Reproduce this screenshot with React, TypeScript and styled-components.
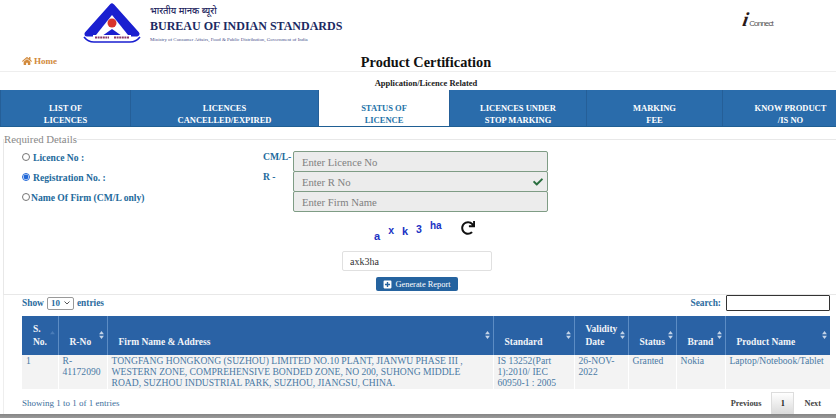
import React from "react";
import styled, { createGlobalStyle } from "styled-components";
import { FaCheck, FaHome, FaPlusSquare, FaRedo } from "react-icons/fa";

const GlobalStyle = createGlobalStyle`
  html, body { margin: 0; padding: 0; background: #fff; }
  body { font-family: "Liberation Serif", "Times New Roman", serif; overflow: hidden; }
  * { box-sizing: border-box; }
`;

const tabs = [
  { top: "LIST OF", bottom: "LICENCES" },
  { top: "LICENCES", bottom: "CANCELLED/EXPIRED" },
  { top: "STATUS OF", bottom: "LICENCE", active: true },
  { top: "LICENCES UNDER", bottom: "STOP MARKING" },
  { top: "MARKING", bottom: "FEE" },
  { top: "KNOW PRODUCT", bottom: "/IS NO" },
];

const headers = [
  { label: "S. No.", width: 36, faint: true },
  { label: "R-No", width: 49 },
  { label: "Firm Name & Address", width: 386 },
  { label: "Standard", width: 81 },
  { label: "Validity Date", width: 54 },
  { label: "Status", width: 48 },
  { label: "Brand", width: 49 },
  { label: "Product Name", width: 105 },
];

const captcha = [
  { ch: "a", y: 7, x: 0, size: 11 },
  { ch: "x", y: 1, x: 8, size: 10.5 },
  { ch: "k", y: 2, x: 8, size: 11 },
  { ch: "3", y: 0, x: 8, size: 10.5 },
  { ch: "ha", y: -3, x: 8, size: 10 },
];

const SortIcon = ({ faint }: { faint?: boolean }) => (
  <SortMark viewBox="0 0 6 10" $faint={faint}>
    <path d="M3 0 L6 4 H0 Z" />
    {!faint && <path d="M3 10 L0 6 H6 Z" />}
  </SortMark>
);

const Logo = () => (
  <svg width="58" height="42" viewBox="0 0 58 42">
    <path d="M29 4 L54 32 H4 Z" fill="#1a1fd0" stroke="#1a1fd0" strokeWidth="5" strokeLinejoin="round" />
    <path d="M29 13 L45 33 H13 Z" fill="#fff" />
    <path d="M29 27 L39 34 H19 Z" fill="#1a1fd0" />
    <circle cx="29" cy="21" r="4.5" fill="#d8342c" />
    <rect x="10" y="33" width="38" height="5" fill="#fff" />
    <path d="M12 35.5 H26 M31 35.5 H46" stroke="#8a3a6a" strokeWidth="2" strokeDasharray="2 0.6" />
    <path d="M1 35 Q5 40 11 40 H47 Q53 40 57 35" fill="none" stroke="#1a1fd0" strokeWidth="1.6" />
  </svg>
);

const App = () => (
  <Page>
    <GlobalStyle />
    <Header>
      <Brand>
        <Logo />
        <BrandText>
          <Hindi>भारतीय मानक ब्यूरो</Hindi>
          <BrandName>BUREAU OF INDIAN STANDARDS</BrandName>
          <Ministry>Ministry of Consumer Affairs, Food &amp; Public Distribution, Government of India</Ministry>
        </BrandText>
      </Brand>
      <Connect>
        <ConnectI>i</ConnectI>Connect
      </Connect>
    </Header>

    <TitleRow>
      <HomeLink><FaHome size={10} /> Home</HomeLink>
      <Title>Product Certification</Title>
    </TitleRow>
    <SubTitle>Application/Licence Related</SubTitle>

    <Tabs>
      {tabs.map((t) => (
        <Tab key={t.top} $active={t.active}>
          {t.top}
          <br />
          {t.bottom}
        </Tab>
      ))}
    </Tabs>

    <Details>
      <Legend>Required Details</Legend>
      <FormGrid>
        <RadioLabel>
          <Radio type="radio" name="mode" readOnly /> Licence No :
        </RadioLabel>
        <Prefix>CM/L-</Prefix>
        <FieldBox><Field placeholder="Enter Licence No" readOnly /></FieldBox>

        <RadioLabel>
          <Radio type="radio" name="mode" defaultChecked /> Registration No. :
        </RadioLabel>
        <Prefix>R -</Prefix>
        <FieldBox>
          <Field placeholder="Enter R No" readOnly />
          <FieldCheck><FaCheck size={10} /></FieldCheck>
        </FieldBox>

        <RadioLabel $tight>
          <Radio type="radio" name="mode" readOnly $tight />Name Of Firm (CM/L only)
        </RadioLabel>
        <Prefix />
        <FieldBox><Field placeholder="Enter Firm Name" readOnly /></FieldBox>
      </FormGrid>

      <CaptchaRow>
        <CaptchaText>
          {captcha.map((c) => (
            <CaptchaChar key={c.ch} $y={c.y} $x={c.x} $size={c.size}>{c.ch}</CaptchaChar>
          ))}
        </CaptchaText>
        <Refresh><FaRedo size={14} /></Refresh>
      </CaptchaRow>

      <CaptchaInput value="axk3ha" readOnly />
      <Generate><FaPlusSquare size={9} /> Generate Report</Generate>
    </Details>

    <TableSection>
      <TableTools>
        <ToolLabel>
          Show <EntriesSelect><option>10</option></EntriesSelect> entries
        </ToolLabel>
        <ToolLabel>
          Search: <SearchBox readOnly />
        </ToolLabel>
      </TableTools>

      <Table>
        <colgroup>
          {headers.map((h) => <col key={h.label} width={h.width} />)}
        </colgroup>
        <thead>
          <tr>
            {headers.map((h) => (
              <Th key={h.label}>
                {h.label}
                <SortIcon faint={h.faint} />
              </Th>
            ))}
          </tr>
        </thead>
        <tbody>
          <tr>
            <Td>1</Td>
            <Td>R-41172090</Td>
            <Td>TONGFANG HONGKONG (SUZHOU) LIMITED NO.10 PLANT, JIANWU PHASE III , WESTERN ZONE, COMPREHENSIVE BONDED ZONE, NO 200, SUHONG MIDDLE ROAD, SUZHOU INDUSTRIAL PARK, SUZHOU, JIANGSU, CHINA.</Td>
            <Td>IS 13252(Part 1):2010/ IEC 60950-1 : 2005</Td>
            <Td>26-NOV-2022</Td>
            <Td>Granted</Td>
            <Td>Nokia</Td>
            <Td>Laptop/Notebook/Tablet</Td>
          </tr>
        </tbody>
      </Table>

      <TableFooter>
        <Showing>Showing 1 to 1 of 1 entries</Showing>
        <Pager>
          <PageLink>Previous</PageLink>
          <PageNumber>1</PageNumber>
          <PageLink>Next</PageLink>
        </Pager>
      </TableFooter>
    </TableSection>
    <BottomEdge />
  </Page>
);

const Page = styled.div`
  width: 836px;
  height: 418px;
  overflow: hidden;
  display: flex;
  flex-direction: column;
  background: #fff;
  color: #222;
`;

const Header = styled.div`
  height: 50px;
  flex: none;
  display: flex;
  justify-content: space-between;
  padding: 2px 63px 0 83px;
`;

const Brand = styled.div`
  display: flex;
  gap: 9px;
`;

const BrandText = styled.div`
  display: flex;
  flex-direction: column;
  padding-top: 4px;
`;

const Hindi = styled.div`
  height: 9px;
  margin-bottom: 4px;
  font: 500 9.2px/9px "Noto Sans", "Liberation Serif", serif;
  color: #23245e;
  white-space: nowrap;
`;

const BrandName = styled.div`
  font-size: 12px;
  line-height: 15px;
  font-weight: bold;
  color: #1b2a63;
  white-space: nowrap;
`;

const Ministry = styled.div`
  font-size: 4.9px;
  line-height: 11px;
  color: #46508a;
  white-space: nowrap;
`;

const Connect = styled.div`
  display: flex;
  align-items: flex-end;
  height: 17px;
  margin-top: 9px;
  font: 8px/9px "Liberation Sans", Arial, sans-serif;
  letter-spacing: -0.85px;
  color: #555;
`;

const ConnectI = styled.span`
  font: italic bold 20px/17px "Liberation Serif", serif;
  color: #2a1a1a;
  margin-right: 1px;
  transform: skewX(-10deg);
`;

const TitleRow = styled.div`
  height: 22px;
  flex: none;
  display: grid;
  grid-template-columns: 1fr auto 1fr;
  align-items: center;
  padding: 0 6px 0 22px;
  border-bottom: 1px solid #eeeeee;
`;

const HomeLink = styled.div`
  display: flex;
  align-items: center;
  gap: 2px;
  margin-top: 1px;
  font-size: 9px;
  font-weight: bold;
  color: #d28a3c;
`;

const Title = styled.div`
  margin-top: 4px;
  font-size: 14.3px;
  font-weight: bold;
  color: #111;
`;

const SubTitle = styled.div`
  height: 18px;
  flex: none;
  text-align: center;
  font-size: 8.5px;
  line-height: 22px;
  font-weight: bold;
  padding-left: 16px;
`;

const Tabs = styled.div`
  height: 37px;
  flex: none;
  overflow: hidden;
  display: grid;
  grid-template-columns: 130px 188px 131px 137px 136px 136px;
  background: #2a6cab;
  border-bottom: 1px solid #1f5f94;
`;

const Tab = styled.div<{ $active?: boolean }>`
  padding-top: 12px;
  text-align: center;
  font-size: 8.5px;
  line-height: 12px;
  font-weight: bold;
  white-space: nowrap;
  color: ${(p) => (p.$active ? "#2272a8" : "#fff")};
  background: ${(p) => (p.$active ? "#fff" : "#2a6cab")};
  border-left: 1px solid #255f98;
`;

const Details = styled.fieldset`
  margin: 6px 0 0 3px;
  padding: 0;
  height: 162px;
  flex: none;
  border: 1px solid #e8e8e8;
  border-right: none;
  display: flex;
  flex-direction: column;
  align-items: flex-start;
`;

const Legend = styled.legend`
  padding: 0;
  font-size: 10.8px;
  line-height: 12px;
  color: #888;
`;

const FormGrid = styled.div`
  display: grid;
  grid-template-columns: 241px 30px 255px;
  grid-auto-rows: 20px;
  margin: 6px 0 0 18px;
`;

const RadioLabel = styled.label<{ $tight?: boolean }>`
  display: flex;
  align-items: center;
  gap: ${(p) => (p.$tight ? 0 : 3)}px;
  font-size: 9.6px;
  font-weight: bold;
  color: #236a9c;
  white-space: nowrap;
  margin-top: -8px;
`;

const Radio = styled.input<{ $tight?: boolean }>`
  width: 8px;
  height: 8px;
  margin: 0 ${(p) => (p.$tight ? 1 : 0)}px 0 0;
  accent-color: #2168d8;
`;

const Prefix = styled.div`
  font-size: 9.6px;
  font-weight: bold;
  color: #236a9c;
  line-height: 12px;
`;

const FieldBox = styled.div`
  position: relative;
  height: 21px;
`;

const Field = styled.input`
  width: 100%;
  height: 100%;
  padding: 0 8px;
  border: 1px solid #7f9c85;
  border-radius: 2px;
  background: #ececec;
  font: 10.7px "Liberation Serif", serif;
  outline: none;
  &::placeholder { color: #808080; opacity: 1; }
`;

const FieldCheck = styled.span`
  position: absolute;
  right: 5px;
  top: 6px;
  color: #2a6e3f;
  line-height: 0;
`;

const CaptchaRow = styled.div`
  display: flex;
  align-items: center;
  margin: 7px 0 0 370px;
  height: 22px;
`;

const CaptchaText = styled.div`
  display: flex;
  width: 87px;
  font: bold 10px "Liberation Sans", Arial, sans-serif;
  color: #2033c4;
  white-space: nowrap;
`;

const CaptchaChar = styled.span<{ $y: number; $x: number; $size: number }>`
  font-size: ${(p) => p.$size}px;
  margin-left: ${(p) => p.$x}px;
  transform: translateY(${(p) => p.$y}px);
`;

const Refresh = styled.span`
  display: flex;
  color: #111;
  margin-top: -2px;
`;

const CaptchaInput = styled.input`
  width: 150px;
  height: 20px;
  margin: 11px 0 0 338px;
  padding: 0 7px;
  border: 1px solid #e0e0e0;
  border-radius: 2px;
  font: 10px "Liberation Serif", serif;
  color: #333;
  outline: none;
`;

const Generate = styled.button`
  display: flex;
  align-items: center;
  justify-content: center;
  gap: 3px;
  width: 82px;
  height: 14px;
  margin: 6px 0 0 372px;
  padding: 0;
  border: none;
  border-radius: 2px;
  background: #25639f;
  color: #fff;
  font: 8.4px "Liberation Serif", serif;
`;

const TableSection = styled.div`
  flex: 1;
  min-height: 0;
  margin-left: 3px;
  padding: 0 6px 0 18px;
  border-left: 1px solid #eeeeee;
  display: flex;
  flex-direction: column;
`;

const TableTools = styled.div`
  height: 21px;
  flex: none;
  display: flex;
  justify-content: space-between;
  align-items: center;
  padding-bottom: 5px;
`;

const ToolLabel = styled.div`
  display: flex;
  align-items: center;
  gap: 3px;
  font-size: 9.4px;
  font-weight: bold;
  color: #2c6c9e;
`;

const EntriesSelect = styled.select`
  appearance: none;
  width: 27px;
  height: 13px;
  padding: 0 0 0 3px;
  font: bold 9px "Liberation Serif", serif;
  color: #2c6c9e;
  background: #fff url("data:image/svg+xml,%3Csvg xmlns='http://www.w3.org/2000/svg' width='6' height='4'%3E%3Cpath d='M.5.5 3 3 5.500.5' fill='none' stroke='%23555'/%3E%3C/svg%3E") no-repeat right 3px center;
  border: 1px solid #999;
  border-radius: 2px;
`;

const SearchBox = styled.input`
  width: 104px;
  height: 16px;
  margin-left: 2px;
  border: 1px solid #333;
  border-radius: 1px;
  background: #fff;
  outline: none;
`;

const Table = styled.table`
  width: 808px;
  flex: none;
  table-layout: fixed;
  border-collapse: collapse;
`;

const Th = styled.th`
  position: relative;
  height: 39px;
  padding: 0 12px 6px 11px;
  vertical-align: bottom;
  text-align: left;
  font-size: 9.5px;
  line-height: 13px;
  color: #f2f4f8;
  background: #2a62a5;
  border-left: 1px solid #5c8cc4;
  &:first-child { border-left: none; }
`;

const SortMark = styled.svg<{ $faint?: boolean }>`
  position: absolute;
  right: 3px;
  top: 15px;
  width: 5px;
  height: 8px;
  fill: ${(p) => (p.$faint ? "#4a7cb8" : "#c4d4e8")};
`;

const Td = styled.td`
  height: 34px;
  padding: 0 4px;
  vertical-align: top;
  font-size: 9.6px;
  line-height: 11px;
  color: #4a7aa5;
  background: #f3f3f3;
  border-left: 1px solid #fff;
  &:first-child { border-left: none; }
`;

const TableFooter = styled.div`
  flex: 1;
  display: flex;
  justify-content: space-between;
  padding-right: 9px;
`;

const Showing = styled.div`
  font-size: 9px;
  line-height: 11px;
  padding-top: 9px;
  color: #3d6f9c;
`;

const Pager = styled.div`
  display: flex;
  align-items: center;
  gap: 10px;
  font-size: 8.3px;
  font-weight: bold;
  color: #444;
  height: 22px;
  margin-top: 3px;
`;

const PageLink = styled.span``;

const PageNumber = styled.span`
  width: 23px;
  height: 22px;
  display: flex;
  align-items: center;
  justify-content: center;
  background: linear-gradient(#fff, #dcdcdc);
  border: 1px solid #ddd;
  color: #222;
`;

const BottomEdge = styled.div`
  height: 4px;
  flex: none;
  background: linear-gradient(#858585, #9a9a9a);
`;

export default App;
